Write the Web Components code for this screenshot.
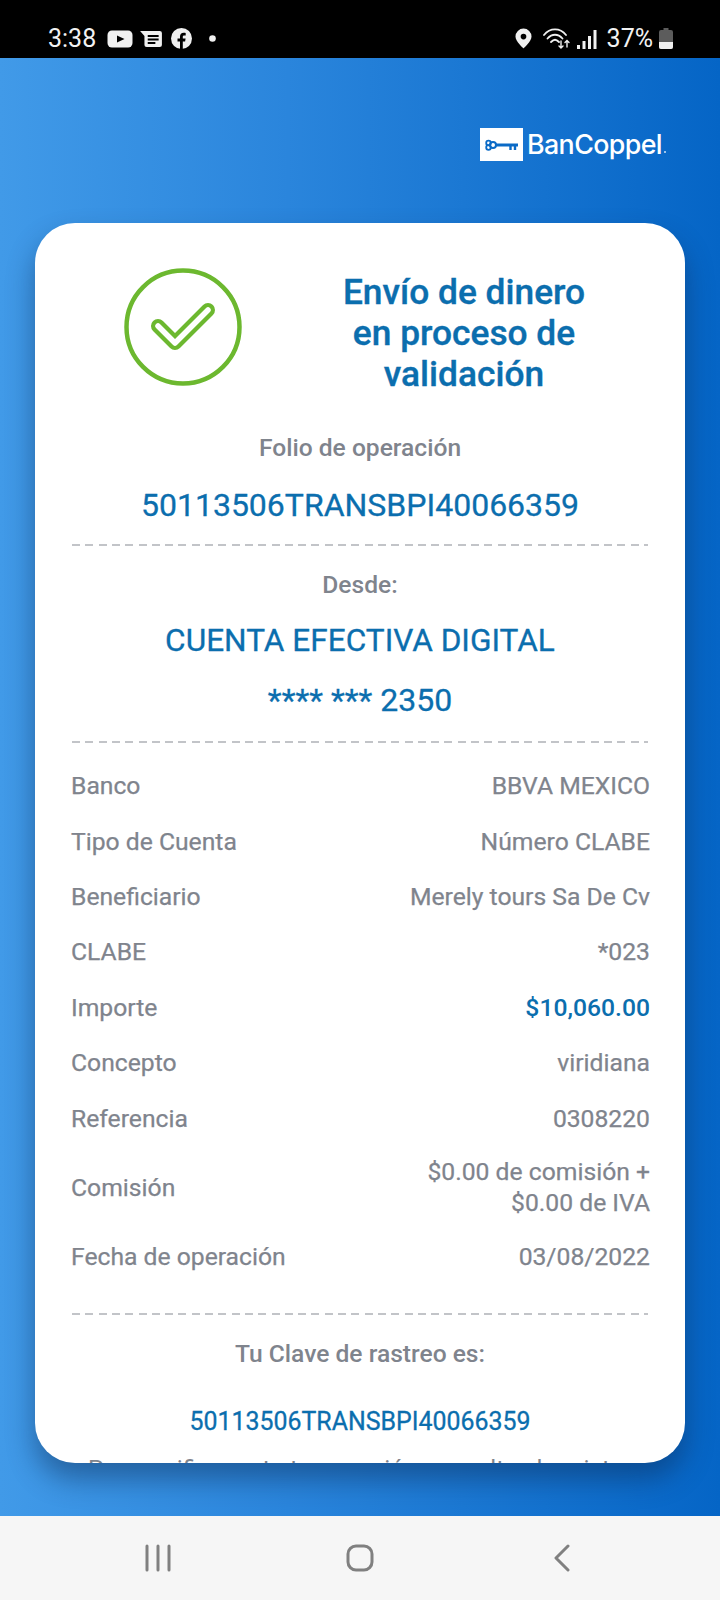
<!DOCTYPE html>
<html lang="es">
<head>
<meta charset="utf-8">
<title>BanCoppel</title>
<style>
  html, body { margin: 0; padding: 0; }
  body { width: 720px; height: 1600px; overflow: hidden; font-family: Roboto, "Liberation Sans", sans-serif; }
  phone-screen { height: 1600px; }
</style>
</head>
<body>
<phone-screen>
  <status-bar slot="top"></status-bar>
  <brand-logo slot="brand"></brand-logo>
  <receipt-card slot="card">
    <receipt-head>Envío de dinero<br>en proceso de<br>validación</receipt-head>

    <receipt-block label="Folio de operación" style="--label-mt:39px;--value-size:32px;--value-mt:27px">
      <span>50113506TRANSBPI40066359</span>
    </receipt-block>
    <dash-line style="--mt:23px"></dash-line>
    <receipt-block label="Desde:" style="--label-mt:25px;--value-size:31.600px;--value-mt:26px">
      <span>CUENTA EFECTIVA DIGITAL</span><br><span class="acct">**** *** 2350</span>
    </receipt-block>
    <dash-line style="--mt:24px"></dash-line>

    <detail-list>
      <detail-row label="Banco">BBVA MEXICO</detail-row>
      <detail-row label="Tipo de Cuenta">Número CLABE</detail-row>
      <detail-row label="Beneficiario">Merely tours Sa De Cv</detail-row>
      <detail-row label="CLABE">*023</detail-row>
      <detail-row label="Importe" accent>$10,060.00</detail-row>
      <detail-row label="Concepto">viridiana</detail-row>
      <detail-row label="Referencia">0308220</detail-row>
      <detail-row label="Comisión" tall>$0.00 de comisión +<br>$0.00 de IVA</detail-row>
      <detail-row label="Fecha de operación">03/08/2022</detail-row>
    </detail-list>

    <dash-line style="--mt:29px"></dash-line>
    <receipt-block label="Tu Clave de rastreo es:" style="--label-mt:25px;--value-size:24.900px;--value-mt:38px">
      <span>50113506TRANSBPI40066359</span>
    </receipt-block>
    <receipt-note>Para verificar esta transacción consulta el registro<br>de movimientos en tu cuenta</receipt-note>
  </receipt-card>
  <nav-bar slot="bottom"></nav-bar>
</phone-screen>

<script>
// small helper so each element only has to hand over its markup
class ShadowEl extends HTMLElement {
    constructor(html) {
        super();
        this.attachShadow({ mode: 'open' });
        this.shadowRoot.innerHTML = html;
    }
}

class PhoneScreen extends ShadowEl {
    constructor() {
        super(`
        <style>
            :host { display: flex; flex-direction: column; width: 720px; }
            .body {
                flex: 1;
                display: flex;
                flex-direction: column;
                padding: 0 35px;
                min-height: 0;
                background: linear-gradient(90deg, #419ae8 0%, #2a85dc 40%, #0565c6 100%);
            }
            .brand { display: flex; justify-content: flex-end; padding: 70px 19px 0 0; height: 165px; box-sizing: border-box; }
        </style>
        <slot name="top"></slot>
        <div class="body">
            <div class="brand"><slot name="brand"></slot></div>
            <slot name="card"></slot>
        </div>
        <slot name="bottom"></slot>
        `);
    }
}

class StatusBar extends ShadowEl {
    constructor() {
        super(`
        <style>
            :host { display: flex; align-items: center; height: 58px; background: #000; color: #f2f2f2; box-sizing: border-box; padding: 19px 47px 0 48px; font-size: 25px; justify-content: space-between; }
            .side { display: flex; align-items: center; }
            svg { display: block; fill: #f0f0f0; }
            .time { margin-right: 11px; }
            .pct { margin: 0 6px 0 10px; }
        </style>
        <div class="side">
            <span class="time">3:38</span>
            <svg width="26" height="18" viewBox="0 0 26 18"><rect x="0.5" y="0.5" width="25" height="17" rx="4.5"/><path d="M10 5.5 L17.5 9 L10 12.5Z" fill="#000"/></svg>
            <svg width="24" height="18" viewBox="0 0 22 18" style="margin-left:6px" preserveAspectRatio="none"><path d="M1 1H19a2 2 0 0 1 2 2V15a2 2 0 0 1-2 2H7a2 2 0 0 1-2-2V6Z"/><path d="M8 5h10v2H8zM8 8.500h10v2H8zM8 12h7v2H8z" fill="#000"/></svg>
            <svg width="21" height="21" viewBox="0 0 21 21" style="margin-left:8px"><circle cx="10.500" cy="10.500" r="10.500"/><path d="M9 21V13.500H6.500V10.500H9V8.500C9 6 10.400 4.700 12.700 4.700c.8 0 1.500.1 2 .2V7.500H13.300c-1.200 0-1.500.6-1.500 1.400V10.500h2.800l-.5 3H11.800V21Z" fill="#000"/></svg>
            <svg width="7" height="7" viewBox="0 0 7 7" style="margin-left:17px"><circle cx="3.500" cy="3.500" r="3.300"/></svg>
        </div>
        <div class="side">
            <svg width="17" height="21" viewBox="0 0 18 21"><path fill-rule="evenodd" d="M9 0a8.500 8.500 0 0 1 8.500 8.500C17.500 14 9 21 9 21S.5 14 .5 8.500A8.500 8.500 0 0 1 9 0Zm0 5.500a3 3 0 1 0 0 6 3 3 0 0 0 0-6Z"/></svg>
            <svg width="28" height="21" viewBox="0 0 28 21" style="margin-left:11px;fill:none;stroke:#f0f0f0;stroke-width:1.800;stroke-linecap:round"><path d="M1 7C7-.5 17-.5 23 7"/><path d="M4.500 10.500C9 5.500 15 5.500 19.500 10.500"/><path d="M8 14c3-3 5-3 8 0"/><path d="M18 13v7M16 18l2 2 2-2" stroke-width="1.400"/><path d="M24 19v-6M22 14.500l2-2 2 2" stroke-width="1.400"/></svg>
            <svg width="20" height="20" viewBox="0 0 20 20" style="margin-left:6px"><rect x="0" y="16" width="3" height="4"/><rect x="5.500" y="12" width="3" height="8"/><rect x="11" y="7" width="3" height="13"/><rect x="16.500" y="1" width="3" height="19"/></svg>
            <span class="pct">37%</span>
            <svg width="14" height="21" viewBox="0 0 14 21"><path d="M4.500 0h5v2H12a2 2 0 0 1 2 2V19a2 2 0 0 1-2 2H2a2 2 0 0 1-2-2V4a2 2 0 0 1 2-2H4.500Z" fill="#5c5c5c"/><path d="M0 14H14V19a2 2 0 0 1-2 2H2a2 2 0 0 1-2-2Z"/></svg>
        </div>
        `);
    }
}

class BrandLogo extends ShadowEl {
    constructor() {
        super(`
        <style>
            :host { display: flex; align-items: center; height: 33px; color: #fff; }
            .tile { width: 43px; height: 33px; background: #fff; display: flex; align-items: center; justify-content: center; margin-right: 4px; }
            .name { font: 500 26.800px/33px Inter, Lato, sans-serif; letter-spacing: -0.6px; }
            .reg { width: 2px; height: 2px; background: #cfe3f7; border-radius: 50%; align-self: flex-end; margin: 0 0 8px 2px; }
        </style>
        <div class="tile">
            <svg width="35" height="14" viewBox="0 0 35 14" fill="none" stroke="#0a6ac6"><circle cx="4.500" cy="5" r="2.300" stroke-width="1.800"/><circle cx="4.500" cy="9.500" r="2.300" stroke-width="1.800"/><circle cx="9" cy="7" r="3" stroke-width="2"/><path d="M12 7H34" stroke-width="3"/><path d="M26.500 7V12M31 7V12" stroke-width="2.400"/></svg>
        </div>
        <span class="name">BanCoppel</span><span class="reg"></span>
        `);
    }
}

class ReceiptCard extends ShadowEl {
    constructor() {
        super(`
        <style>
            :host { display: block; height: 1240px; background: #fff; border-radius: 40px; box-shadow: 0 16px 28px rgba(10, 40, 80, .45); color: #7f848d; }
            .clip { height: 100%; overflow: hidden; border-radius: 40px; padding: 0 37px; box-sizing: border-box; }
        </style>
        <div class="clip"><slot></slot></div>
        `);
    }
}

class ReceiptHead extends ShadowEl {
    constructor() {
        super(`
        <style>
            :host { display: grid; grid-template-columns: 166px 1fr; align-items: start; padding-top: 44px; }
            svg { display: block; margin-left: 52px; margin-top: 1px; }
            h1 { margin: 5px 0 0; font: 500 35.300px/41px Roboto, sans-serif; color: #0b6eae; -webkit-text-stroke: 0.35px #0b6eae; text-align: center; padding-left: 42px; }
        </style>
        <svg width="118" height="118" viewBox="0 0 118 118" fill="none">
            <circle cx="59" cy="59" r="56.500" stroke="#6cb82f" stroke-width="4.500"/>
            <path d="M34 58 L51 75 L84 42" stroke="#6cb82f" stroke-width="14" stroke-linecap="round" stroke-linejoin="round"/>
            <path d="M34 58 L51 75 L84 42" stroke="#fff" stroke-width="5.500" stroke-linecap="round" stroke-linejoin="round"/>
        </svg>
        <h1><slot></slot></h1>
        `);
    }
}

class ReceiptBlock extends ShadowEl {
    constructor() {
        super(`
        <style>
            :host { display: block; text-align: center; }
            .label { margin-top: var(--label-mt, 20px); font: 500 24.600px/28px Roboto, sans-serif; color: #7f848d; }
            .value { margin-top: var(--value-mt, 20px); font: 400 var(--value-size, 28px)/32px Roboto, sans-serif; color: #0b6eae; -webkit-text-stroke: 0.3px #0b6eae; }
            ::slotted(.acct) { display: inline-block; margin-top: 27px; font-size: 32px; }
        </style>
        <div class="label"></div>
        <div class="value"><slot></slot></div>
        `);
    }
    connectedCallback() {
        this.shadowRoot.querySelector('.label').textContent = this.getAttribute('label');
    }
}

class DashLine extends ShadowEl {
    constructor() {
        super(`
        <style>
            :host { display: block; margin-top: var(--mt, 20px); height: 2px; background: repeating-linear-gradient(90deg, #c2c4c8 0 8px, transparent 8px 13.300px); }
        </style>
        `);
    }
}

class DetailList extends ShadowEl {
    constructor() {
        super(`
        <style>
            :host { display: flex; flex-direction: column; margin-top: 15px; }
        </style>
        <slot></slot>
        `);
    }
}

class DetailRow extends ShadowEl {
    constructor() {
        super(`
        <style>
            :host { display: flex; align-items: center; justify-content: space-between; height: 55.400px; font: 400 24.700px/31px Roboto, sans-serif; color: #7f848d; -webkit-text-stroke: 0.25px #7f848d; margin: 0 -2px 0 -1px; }
            :host([tall]) { height: 83px; }
            :host([accent]) .val { color: #0b6eae; font-weight: 500; -webkit-text-stroke: 0; }
            .val { text-align: right; }
        </style>
        <span class="key"></span>
        <span class="val"><slot></slot></span>
        `);
    }
    connectedCallback() {
        this.shadowRoot.querySelector('.key').textContent = this.getAttribute('label');
    }
}

class ReceiptNote extends ShadowEl {
    constructor() {
        super(`
        <style>
            :host { display: block; margin-top: 16px; text-align: center; font: 400 24.500px/30px Roboto, sans-serif; color: #7f848d; }
        </style>
        <slot></slot>
        `);
    }
}

class NavBar extends ShadowEl {
    constructor() {
        super(`
        <style>
            :host { display: grid; grid-template-columns: repeat(3, 202px); height: 84px; background: #f6f6f6; align-items: center; justify-items: center; padding: 0 57px; }
            svg { display: block; fill: none; stroke: #808080; stroke-linecap: round; stroke-linejoin: round; }
        </style>
        <svg width="28" height="28" viewBox="0 0 28 28" stroke-width="3"><path d="M3 2V26M14 2V26M25 2V26"/></svg>
        <svg width="28" height="28" viewBox="0 0 28 28" stroke-width="3"><rect x="2" y="2" width="24" height="24" rx="8"/></svg>
        <svg width="18" height="28" viewBox="0 0 18 28" stroke-width="3"><path d="M15 2L3 14L15 26"/></svg>
        `);
    }
}

customElements.define('phone-screen', PhoneScreen);
customElements.define('status-bar', StatusBar);
customElements.define('brand-logo', BrandLogo);
customElements.define('receipt-card', ReceiptCard);
customElements.define('receipt-head', ReceiptHead);
customElements.define('receipt-block', ReceiptBlock);
customElements.define('dash-line', DashLine);
customElements.define('detail-list', DetailList);
customElements.define('detail-row', DetailRow);
customElements.define('receipt-note', ReceiptNote);
customElements.define('nav-bar', NavBar);
</script>
</body>
</html>
